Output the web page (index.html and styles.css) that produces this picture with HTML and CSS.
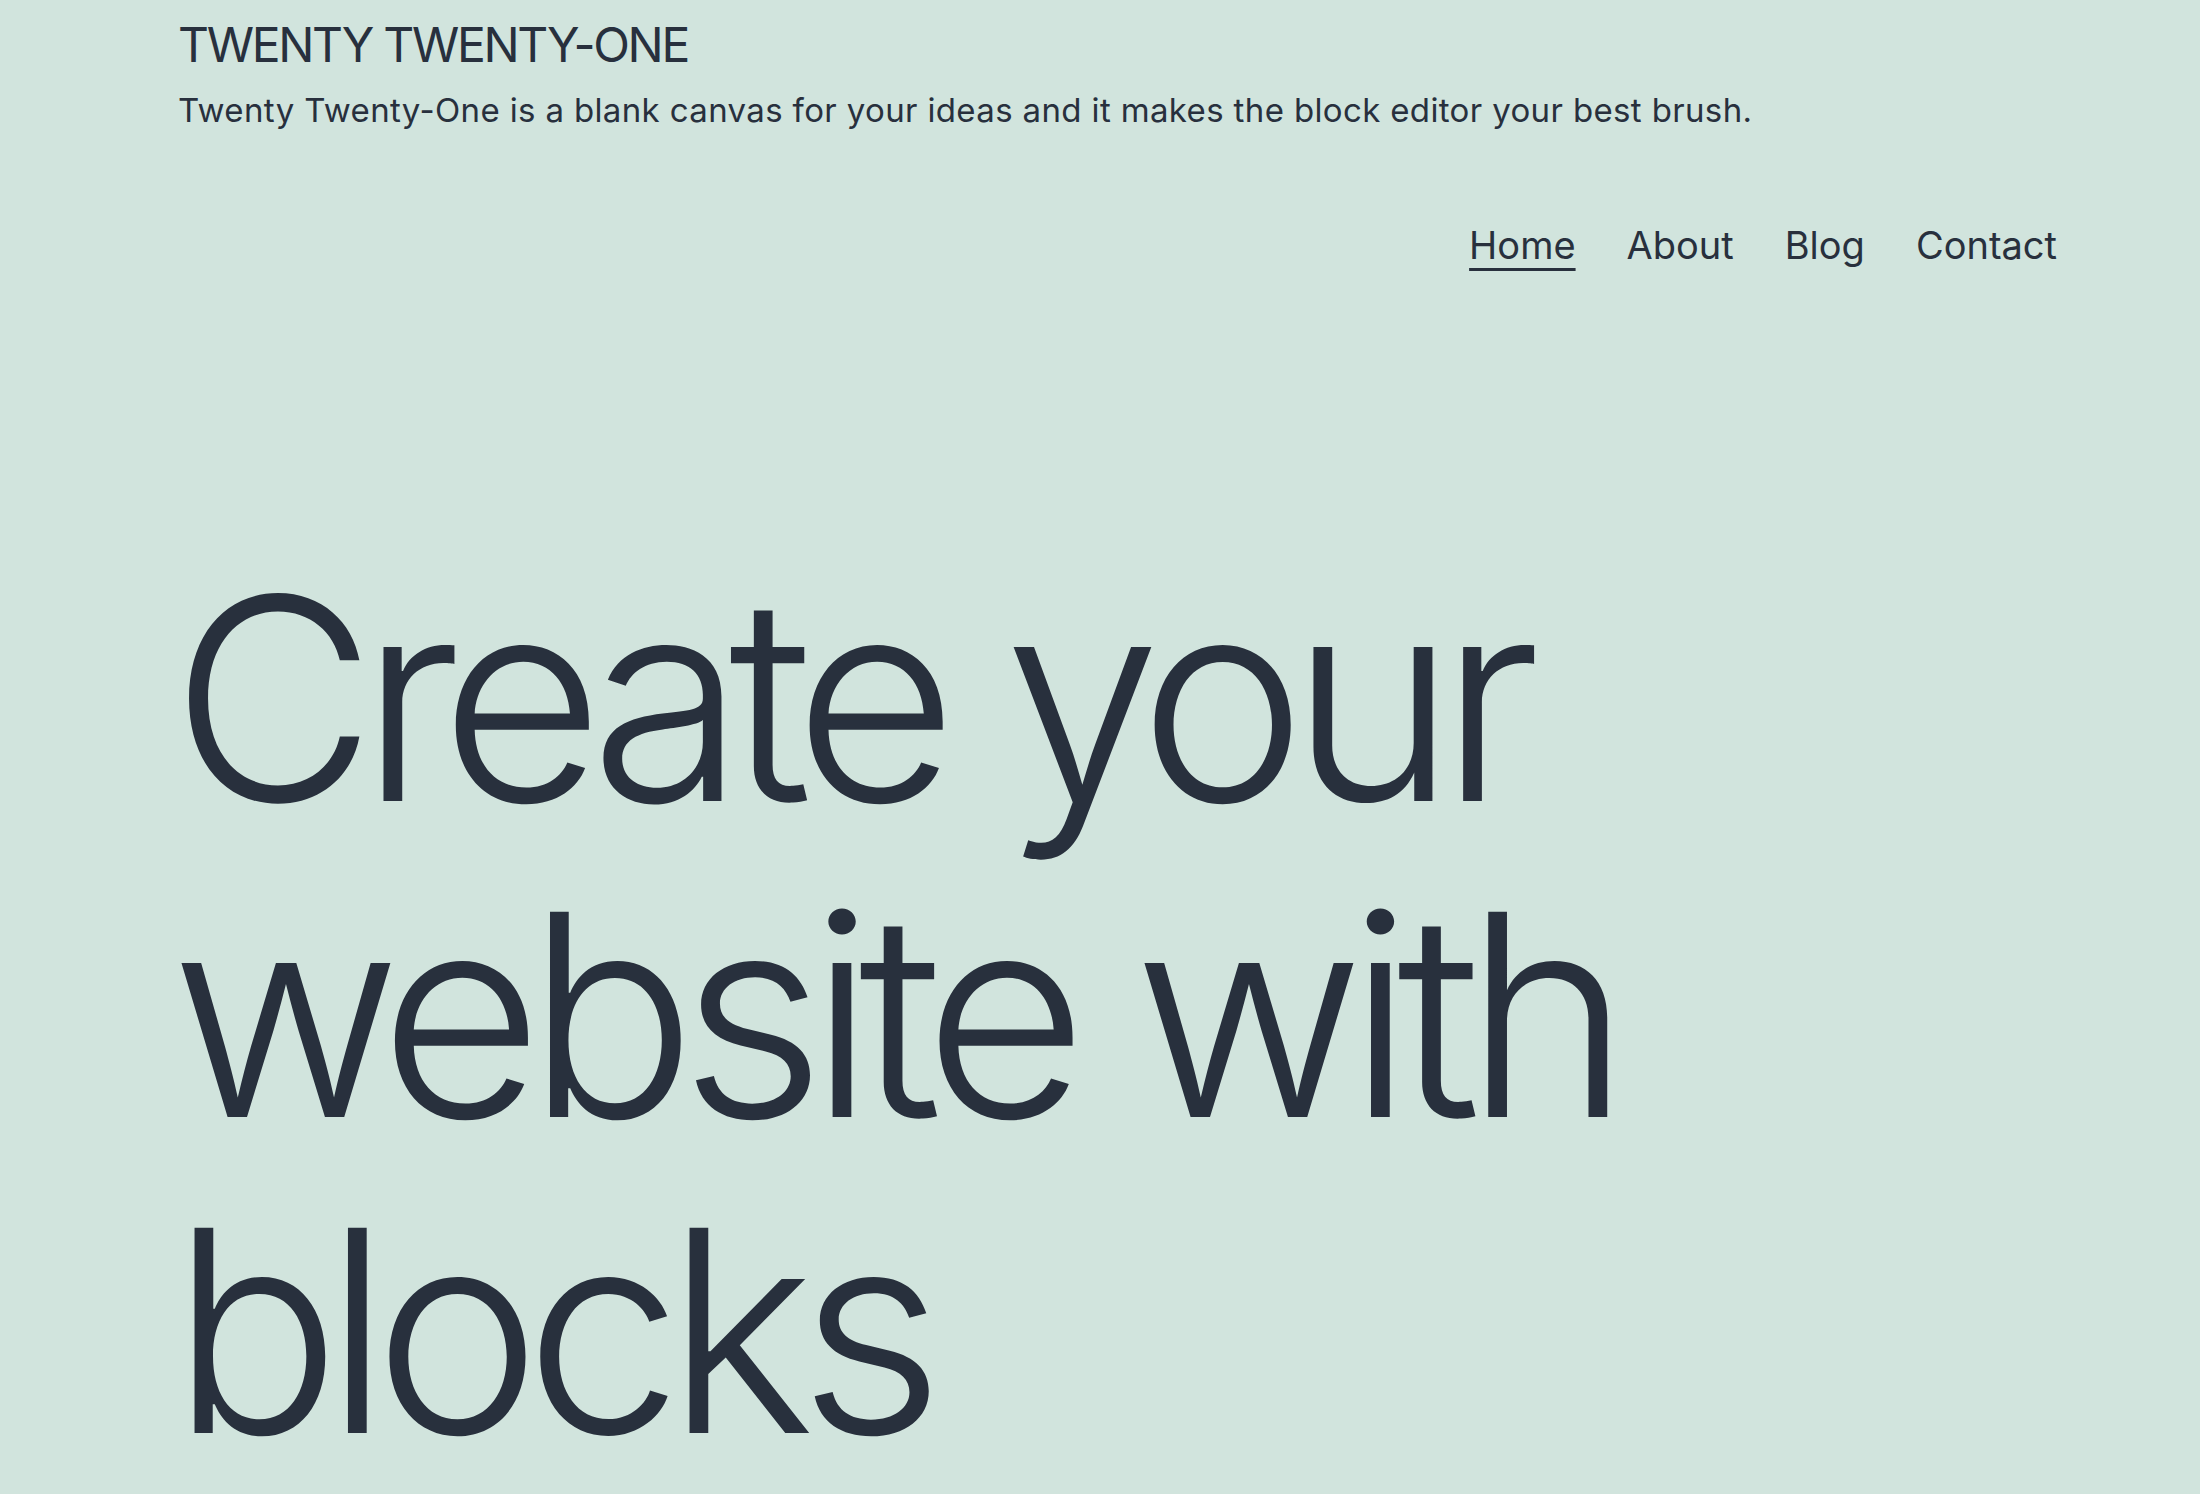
FILE: index.html
```html
<!DOCTYPE html>
<html lang="en">
<head>
<meta charset="utf-8">
<title>Twenty Twenty-One</title>
<link rel="stylesheet" href="styles.css">
</head>
<body>
<header class="site-header">
  <p class="site-title">TWENTY TWENTY-ONE</p>
  <p class="site-description">Twenty Twenty-One is a blank canvas for your ideas and it makes the block editor your best brush.</p>
  <nav class="primary-nav">
    <a class="nav-link current" href="#">Home</a>
    <a class="nav-link" href="#">About</a>
    <a class="nav-link" href="#">Blog</a>
    <a class="nav-link" href="#">Contact</a>
  </nav>
</header>
<main class="site-main">
  <h1 class="hero-title">Create your website with blocks</h1>
</main>
</body>
</html>
```
FILE: styles.css
```css
html, body {
  margin: 0;
  padding: 0;
}
body {
  background: #d1e4dd;
  color: #28303d;
  font-family: Inter, "Noto Sans", "Liberation Sans", sans-serif;
  min-height: 1494px;
}
.site-header {
  padding: 14px 143px 0 178px;
  display: flex;
  flex-direction: column;
}
.site-title {
  margin: 0;
  font-size: 48px;
  line-height: 62px;
  font-weight: 400;
  letter-spacing: -2.3px;
}
.site-description {
  margin: 12px 0 0;
  font-size: 33px;
  line-height: 44px;
  letter-spacing: 0.36px;
}
.primary-nav {
  margin-top: 88px;
  display: flex;
  justify-content: flex-end;
  gap: 51px;
}
.nav-link {
  color: #28303d;
  text-decoration: none;
  font-size: 38px;
  line-height: 50px;
}
.nav-link.current {
  text-decoration: underline;
  text-decoration-thickness: 3px;
  text-underline-offset: 9px;
}
.site-main {
  padding: 271px 178px 0 171px;
}
.hero-title {
  margin: 0;
  font-size: 282px;
  line-height: 316px;
  font-weight: 300;
  letter-spacing: -0.058em;
  max-width: 1700px;
}
```
